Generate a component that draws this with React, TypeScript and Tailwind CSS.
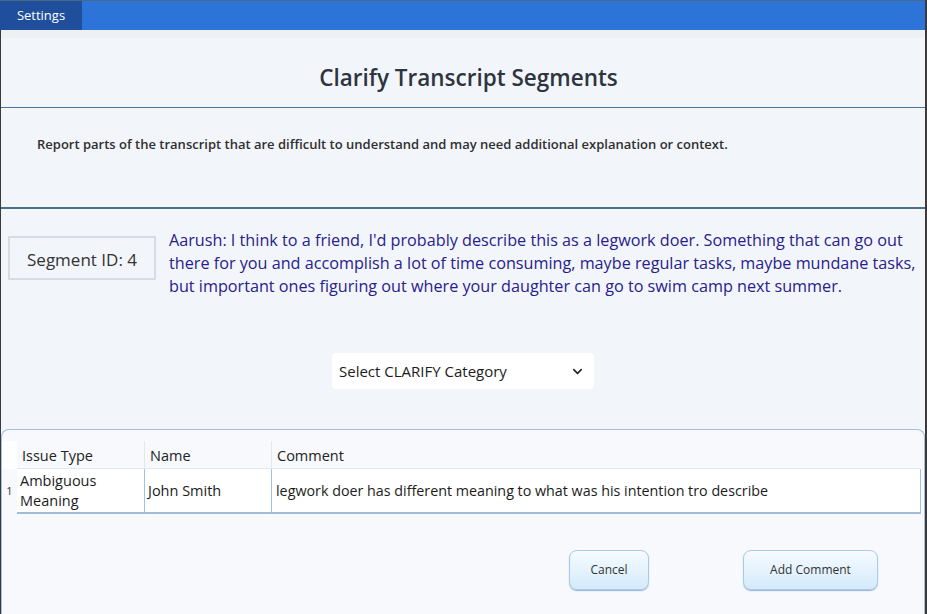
import React from 'react';
import { ChevronDown } from 'lucide-react';

const font = { fontFamily: '"Open Sans", "Noto Sans", sans-serif' };

export default function App() {
  return (
    <div
      className="w-[927px] h-[614px] overflow-hidden bg-[#f2f6fb] flex flex-col border-r-2 border-[#3a3a3a]"
      style={font}
    >
      {/* Top bar */}
      <div className="h-[30px] shrink-0 flex bg-[#2c74d7] border-t border-[#4a6888]">
        <div className="w-[82px] bg-[#1f4f9c] text-white text-[13px] flex items-center justify-center">
          Settings
        </div>
      </div>

      <div className="flex-1 flex flex-col border-l border-[#3a3a3a]">
        <div className="h-[8px] shrink-0 bg-[#eef1f4]" />

        {/* Title */}
        <div className="h-[70px] shrink-0 flex items-center justify-center border-b border-[#4e7394] pt-[10px] pl-[11px]">
          <h1 className="text-[22.5px] font-semibold text-[#2e3440]">
            Clarify Transcript Segments
          </h1>
        </div>

        {/* Description */}
        <div className="h-[101px] shrink-0 border-b-2 border-[#48708f] pl-[36px] pt-[27px]">
          <p className="text-[13px] font-semibold text-[#2f2f2f]">
            Report parts of the transcript that are difficult to understand and may need additional explanation or context.
          </p>
        </div>

        {/* Segment */}
        <div className="flex items-start pl-[7px] pt-[20px] gap-[13px]">
          <div className="mt-[7px] w-[148px] h-[44px] shrink-0 border-2 border-[#d8dce2] flex items-center justify-center pt-[4px] text-[17px] text-[#333]">
            Segment ID: 4
          </div>
          <p className="w-[752px] text-[16.2px] leading-[23px] text-[#28208d]">
            Aarush: I think to a friend, I'd probably describe this as a legwork doer. Something that can go out there for you and accomplish a lot of time consuming, maybe regular tasks, maybe mundane tasks, but important ones figuring out where your daughter can go to swim camp next summer.
          </p>
        </div>

        {/* Dropdown */}
        <div className="flex justify-center mt-[55px]">
          <div className="w-[262px] h-[36px] bg-white rounded-[4px] flex items-center justify-between pl-[7px] pr-[9px] text-[15px] text-[#1c1c1c]">
            <span>Select CLARIFY Category</span>
            <ChevronDown className="w-[15px] h-[15px] text-[#222]" strokeWidth={2.5} />
          </div>
        </div>

        {/* Table panel */}
        <div className="mt-[40px] h-[186px] shrink-0 bg-[#f7f9fd] border border-b-0 border-[#a9bed6] rounded-t-[8px] pt-[11px]">
          <div className="flex h-[28px] text-[14.5px] text-[#222]">
            <div className="w-[15px] bg-[#fdfeff]" />
            <div className="w-[127px] pl-[5px] border-b border-[#e3e8ef] flex items-end pb-[1px]">Issue Type</div>
            <div className="w-[127px] pl-[5px] border-l border-b border-[#e3e8ef] flex items-end pb-[1px]">Name</div>
            <div className="w-[649px] pl-[5px] border-l border-b border-[#e3e8ef] flex items-end pb-[1px]">Comment</div>
          </div>
          <div className="flex h-[45px] text-[14.5px] text-[#1c1c1c]">
            <div className="w-[15px] flex items-center justify-center text-[11px] text-[#333]">1</div>
            <div className="w-[127px] bg-white border-b-2 border-[#9fbcdb] pl-[3px] flex items-center leading-[20px]">
              Ambiguous
              <br />
              Meaning
            </div>
            <div className="w-[127px] bg-white border-l border-b-2 border-[#9cc4ea] border-b-[#9fbcdb] pl-[3px] flex items-center">
              John Smith
            </div>
            <div className="w-[650px] bg-white border-l border-r border-b-2 border-[#9cc4ea] border-b-[#9fbcdb] pl-[4px] flex items-center text-[14.3px]">
              legwork doer has different meaning to what was his intention tro describe
            </div>
          </div>

          <div className="flex mt-[36px] pl-[567px] gap-[94px]">
            <button className="w-[80px] h-[40px] rounded-[8px] border border-[#a9cbeb] bg-gradient-to-b from-[#f6fbff] to-[#d4eafb] shadow-[0_1px_1px_rgba(90,130,180,0.6)] text-[12px] text-[#333]">
              Cancel
            </button>
            <button className="w-[135px] h-[40px] rounded-[8px] border border-[#a9cbeb] bg-gradient-to-b from-[#f6fbff] to-[#d4eafb] shadow-[0_1px_1px_rgba(90,130,180,0.6)] text-[12px] text-[#333]">
              Add Comment
            </button>
          </div>
        </div>
      </div>
    </div>
  );
}
